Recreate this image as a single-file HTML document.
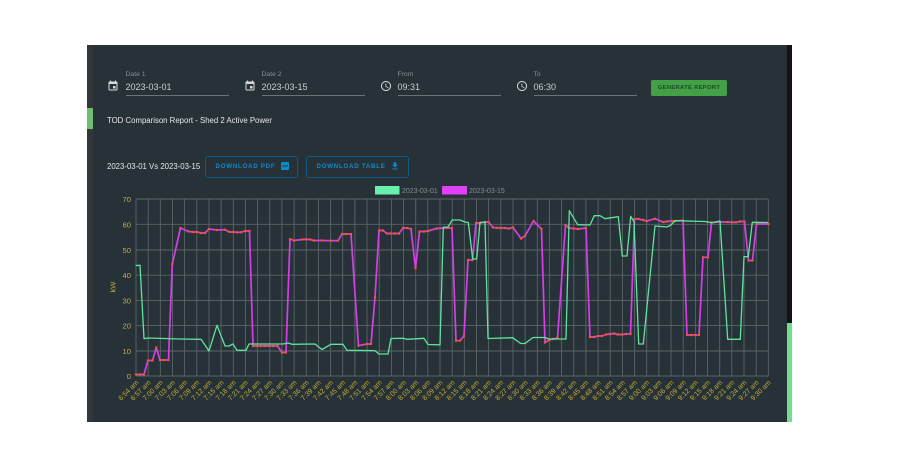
<!DOCTYPE html>
<html lang="en">
<head>
<meta charset="utf-8">
<title>TOD Comparison Report</title>
<style>
html,body{margin:0;padding:0;background:#fff;width:900px;height:450px;overflow:hidden}
body{position:relative;font-family:"Liberation Sans",sans-serif}
#wrap{position:absolute;left:0;top:0;width:900px;height:450px;filter:blur(.3px)}
.abs{position:absolute;white-space:nowrap}
#panel{left:87px;top:45px;width:700px;height:377px;background:#263238}
#ls{left:87px;top:45px;width:6px;height:377px;background:#333536}
#lg{left:87px;top:108px;width:6px;height:21px;background:#6dbd74}
#rs{left:787px;top:45px;width:5px;height:278px;background:#111314}
#rg{left:787px;top:323px;width:5px;height:99px;background:#72dd8e}
.lab{font-size:6.800px;line-height:9px;color:#858e92;top:70px}
.val{font-size:9px;line-height:12px;color:#c9ced0;top:80.500px}
.ul{height:1px;background:#6a7377;top:95px;width:103px}
.ic{top:80px;width:12px;height:12px}
#gen{left:651px;top:80px;width:76px;height:16px;background:#43a047;border-radius:2px;color:#1b4a26;font-size:5.800px;font-weight:bold;letter-spacing:.32px;line-height:16px;text-align:center}
.t{font-size:7.800px;line-height:11px;color:#e4e7e8;font-weight:500}
.btn{top:156px;height:20px;border:1px solid #0d5a83;border-radius:3px;color:#0a8ad0;font-size:6.200px;font-weight:bold;letter-spacing:.72px;line-height:20px;box-sizing:content-box}
svg text{font-family:"Liberation Sans",sans-serif}
</style>
</head>
<body>
<div id="wrap">
<div class="abs" id="panel"></div>
<div class="abs" id="ls"></div>
<div class="abs" id="lg"></div>
<div class="abs" id="rs"></div>
<div class="abs" id="rg"></div>

<div class="abs lab" style="left:125.500px">Date 1</div>
<div class="abs val" style="left:125.500px">2023-03-01</div>
<div class="abs ul" style="left:125.500px"></div>
<div class="abs lab" style="left:261.500px">Date 2</div>
<div class="abs val" style="left:261.500px">2023-03-15</div>
<div class="abs ul" style="left:261.500px"></div>
<div class="abs lab" style="left:397.500px">From</div>
<div class="abs val" style="left:397.500px">09:31</div>
<div class="abs ul" style="left:397.500px"></div>
<div class="abs lab" style="left:533.500px">To</div>
<div class="abs val" style="left:533.500px">06:30</div>
<div class="abs ul" style="left:533.500px"></div>

<svg class="abs ic" style="left:107px" viewBox="0 0 24 24"><path fill="#d5d9da" d="M17 12h-5v5h5v-5zM16 1v2H8V1H6v2H5c-1.100 0-2 .9-2 2v14c0 1.100.9 2 2 2h14c1.100 0 2-.9 2-2V5c0-1.100-.9-2-2-2h-1V1h-2zm3 18H5V8h14v11z"/></svg>
<svg class="abs ic" style="left:243.500px" viewBox="0 0 24 24"><path fill="#d5d9da" d="M17 12h-5v5h5v-5zM16 1v2H8V1H6v2H5c-1.100 0-2 .9-2 2v14c0 1.100.9 2 2 2h14c1.100 0 2-.9 2-2V5c0-1.100-.9-2-2-2h-1V1h-2zm3 18H5V8h14v11z"/></svg>
<svg class="abs ic" style="left:379.500px" viewBox="0 0 24 24"><path fill="#d5d9da" d="M11.990 2C6.470 2 2 6.480 2 12s4.470 10 9.990 10C17.520 22 22 17.520 22 12S17.520 2 11.990 2zM12 20c-4.420 0-8-3.580-8-8s3.580-8 8-8 8 3.580 8 8-3.580 8-8 8zm.5-13H11v6l5.250 3.150.75-1.230-4.500-2.670z"/></svg>
<svg class="abs ic" style="left:515.500px" viewBox="0 0 24 24"><path fill="#d5d9da" d="M11.990 2C6.470 2 2 6.480 2 12s4.470 10 9.990 10C17.520 22 22 17.520 22 12S17.520 2 11.990 2zM12 20c-4.420 0-8-3.580-8-8s3.580-8 8-8 8 3.580 8 8-3.580 8-8 8zm.5-13H11v6l5.250 3.150.75-1.230-4.500-2.670z"/></svg>

<div class="abs" id="gen">GENERATE REPORT</div>

<div class="abs t" style="left:107px;top:115px">TOD Comparison Report - Shed 2 Active Power</div>
<div class="abs t" style="left:107px;top:161px">2023-03-01 Vs 2023-03-15</div>

<div class="abs btn" style="left:205px;width:91px"><span style="margin-left:9.500px">DOWNLOAD PDF</span></div>
<div class="abs" style="left:281px;top:162px;width:8px;height:8px;background:#0a8ad0;border-radius:1px"></div>
<div class="abs" style="left:282px;top:165px;width:6px;height:2px;background:#1e5f86"></div>
<div class="abs btn" style="left:306px;width:101px"><span style="margin-left:9.500px">DOWNLOAD TABLE</span></div>
<svg class="abs" style="left:389.500px;top:160.500px;width:10px;height:10px" viewBox="0 0 24 24"><path fill="#0a8ad0" d="M19 9h-4V3H9v6H5l7 7 7-7zM5 18v2h14v-2H5z"/></svg>

<svg class="abs" style="left:0;top:0" width="900" height="450" viewBox="0 0 900 450">
<defs>
<marker id="m" markerUnits="userSpaceOnUse" markerWidth="3" markerHeight="3" refX="1.500" refY="1.500"><rect width="2.200" height="2.200" x=".4" y=".4" fill="#f4581e"/></marker>
</defs>
<rect x="375" y="186" width="24.500" height="8.500" fill="#69f0ae"/>
<rect x="442" y="186" width="25" height="8.500" fill="#e040fb"/>
<text x="402" y="193" font-size="7" fill="#858e92">2023-03-01</text>
<text x="469" y="193" font-size="7" fill="#858e92">2023-03-15</text>

<path fill="none" stroke="#5b6569" stroke-width=".9" d="M136 199H768.300M136 224.300H768.300M136 250H768.300M136 275.200H768.300M136 300.400H768.300M136 325.600H768.300M136 351H768.300M136 376H768.300M136 199V376M148.200 199V376M160.300 199V376M172.500 199V376M184.600 199V376M196.800 199V376M209 199V376M221.100 199V376M233.300 199V376M245.400 199V376M257.600 199V376M269.800 199V376M281.900 199V376M294.100 199V376M306.200 199V376M318.400 199V376M330.600 199V376M342.700 199V376M354.900 199V376M367 199V376M379.200 199V376M391.400 199V376M403.500 199V376M415.700 199V376M427.800 199V376M440 199V376M452.200 199V376M464.300 199V376M476.500 199V376M488.600 199V376M500.800 199V376M513 199V376M525.100 199V376M537.300 199V376M549.400 199V376M561.600 199V376M573.800 199V376M585.900 199V376M598.100 199V376M610.200 199V376M622.400 199V376M634.600 199V376M646.700 199V376M658.900 199V376M671 199V376M683.200 199V376M695.400 199V376M707.500 199V376M719.700 199V376M731.800 199V376M744 199V376M756.200 199V376M768.300 199V376"/>

<g font-size="7.600" fill="#bfae45" text-anchor="end">
<text x="131" y="202">70</text><text x="131" y="227.300">60</text><text x="131" y="253">50</text><text x="131" y="278.200">40</text><text x="131" y="303.400">30</text><text x="131" y="328.600">20</text><text x="131" y="354">10</text><text x="131" y="379">0</text>
</g>
<text x="0" y="0" font-size="7.600" fill="#bfae45" text-anchor="middle" transform="translate(115.500 287) rotate(-90)">kW</text>

<polyline fill="none" stroke="#d63ee8" stroke-width="1.700" stroke-linejoin="round" marker-start="url(#m)" marker-mid="url(#m)" marker-end="url(#m)" points="136,374.500 140,374.500 144,374.500 148,360.500 152.500,360.500 156.300,347.500 160,360 164,360 168.500,360 172.300,264 180.500,228 188.500,231.500 193,232 197,232 201,233 205,233 209,229 217,230 225,229.700 229.500,232 233,232 237,232.300 241,232.300 245,231 249.500,231 253,346 257,346 261,346 265,346 269,346 273,346 277.500,346 282,352.500 286,352.500 290,239 294,240.500 302,239.500 306,239.300 310,239.500 314,240.500 322,240.500 331,240.700 338,240.700 342,234 346,234 351,234 358.500,345.700 367,344 371,344 375,297.300 379,230.500 383,230.500 387,233.500 391,233.500 395,233.500 399,233.500 403,228 407,228 411,229 415.500,268.300 419.500,231.500 424,231.500 428,231 436.500,228.500 444,228 448,228 452,228 456,340.700 460,340.700 464,336 468,260 472.500,260 476,223 480,223 485,222 488.500,222 493,227.500 497,227.800 501,228 505,228 509,228.500 513,227.500 521,238.500 525,236 533.500,221 541.500,229 545,342.500 549,340 553,339 557.500,338 565.500,225 569,228 573.500,228.500 578,229 586,228 590,337 594,337 598,336 602,336 606,334.500 610,334 614,333.500 618,334.500 622,334.500 626,334 630.500,334 634.500,219 638.500,219 643,220 647,221 655,218.700 663,222 667,221.500 672,221 675,221 683,220.500 687,335 691,335 695,335 699,335 703,257.300 708,257.300 711.500,222.500 720,222 727.500,222 732,222.300 736,222.300 740,221.500 744.500,221.500 748.500,260.500 752.500,260.500 756.500,224 768.500,224"/>

<polyline fill="none" stroke="#5fe39d" stroke-width="1.300" stroke-linejoin="round" points="135.500,265.500 140,265.300 144,338.700 148,338 180,339 201,339.300 209,351 217,325.300 225,346 229,346 233,344 237,350.300 246,350.300 249,344 283,344 288,343 292,344.300 315,344 322,349.500 331,344.300 343,344.300 347,350.300 375,350.700 379,354 388,354 391,338.500 403,338.300 407,339.300 424,338.300 428,344.500 440,344.800 443.300,227.300 448,227 452.300,220 460,220 465,222 468.300,222.500 472.700,259 476.700,259 480,222.500 485,222 488,338.500 512.700,337.700 520.700,343.500 525,343.500 533,337.500 545,337.500 549,339 566,339 569.300,210.700 577.700,224.700 590,225 594.300,215.700 600,215.700 605,218.700 618.300,216.700 622.300,256 627,256 630.700,216.300 634,221.700 638.700,344 643.300,344 655,226 667,227 671,225 675,220.700 705,221.500 711.700,222.700 720,221 727.700,339.300 740.300,339.300 744,256.700 748.300,256.700 752.300,222.300 768,222.500"/>

<g font-size="7" fill="#c4ac35" text-anchor="end">
<text transform="translate(139 383) rotate(-45)">6:54 am</text>
<text transform="translate(151.200 383) rotate(-45)">6:57 am</text>
<text transform="translate(163.300 383) rotate(-45)">7:00 am</text>
<text transform="translate(175.500 383) rotate(-45)">7:03 am</text>
<text transform="translate(187.600 383) rotate(-45)">7:06 am</text>
<text transform="translate(199.800 383) rotate(-45)">7:09 am</text>
<text transform="translate(212 383) rotate(-45)">7:12 am</text>
<text transform="translate(224.100 383) rotate(-45)">7:15 am</text>
<text transform="translate(236.300 383) rotate(-45)">7:18 am</text>
<text transform="translate(248.400 383) rotate(-45)">7:21 am</text>
<text transform="translate(260.600 383) rotate(-45)">7:24 am</text>
<text transform="translate(272.800 383) rotate(-45)">7:27 am</text>
<text transform="translate(284.900 383) rotate(-45)">7:30 am</text>
<text transform="translate(297.100 383) rotate(-45)">7:33 am</text>
<text transform="translate(309.200 383) rotate(-45)">7:36 am</text>
<text transform="translate(321.400 383) rotate(-45)">7:39 am</text>
<text transform="translate(333.600 383) rotate(-45)">7:42 am</text>
<text transform="translate(345.700 383) rotate(-45)">7:45 am</text>
<text transform="translate(357.900 383) rotate(-45)">7:48 am</text>
<text transform="translate(370 383) rotate(-45)">7:51 am</text>
<text transform="translate(382.200 383) rotate(-45)">7:54 am</text>
<text transform="translate(394.400 383) rotate(-45)">7:57 am</text>
<text transform="translate(406.500 383) rotate(-45)">8:00 am</text>
<text transform="translate(418.700 383) rotate(-45)">8:03 am</text>
<text transform="translate(430.800 383) rotate(-45)">8:06 am</text>
<text transform="translate(443 383) rotate(-45)">8:09 am</text>
<text transform="translate(455.200 383) rotate(-45)">8:12 am</text>
<text transform="translate(467.300 383) rotate(-45)">8:15 am</text>
<text transform="translate(479.500 383) rotate(-45)">8:18 am</text>
<text transform="translate(491.600 383) rotate(-45)">8:21 am</text>
<text transform="translate(503.800 383) rotate(-45)">8:24 am</text>
<text transform="translate(516 383) rotate(-45)">8:27 am</text>
<text transform="translate(528.100 383) rotate(-45)">8:30 am</text>
<text transform="translate(540.300 383) rotate(-45)">8:33 am</text>
<text transform="translate(552.400 383) rotate(-45)">8:36 am</text>
<text transform="translate(564.600 383) rotate(-45)">8:39 am</text>
<text transform="translate(576.800 383) rotate(-45)">8:42 am</text>
<text transform="translate(588.900 383) rotate(-45)">8:45 am</text>
<text transform="translate(601.100 383) rotate(-45)">8:48 am</text>
<text transform="translate(613.200 383) rotate(-45)">8:51 am</text>
<text transform="translate(625.400 383) rotate(-45)">8:54 am</text>
<text transform="translate(637.600 383) rotate(-45)">8:57 am</text>
<text transform="translate(649.700 383) rotate(-45)">9:00 am</text>
<text transform="translate(661.900 383) rotate(-45)">9:03 am</text>
<text transform="translate(674 383) rotate(-45)">9:06 am</text>
<text transform="translate(686.200 383) rotate(-45)">9:09 am</text>
<text transform="translate(698.400 383) rotate(-45)">9:12 am</text>
<text transform="translate(710.500 383) rotate(-45)">9:15 am</text>
<text transform="translate(722.700 383) rotate(-45)">9:18 am</text>
<text transform="translate(734.800 383) rotate(-45)">9:21 am</text>
<text transform="translate(747 383) rotate(-45)">9:24 am</text>
<text transform="translate(759.200 383) rotate(-45)">9:27 am</text>
<text transform="translate(771.300 383) rotate(-45)">9:30 am</text>
</g>
</svg>
</div>
</body>
</html>
